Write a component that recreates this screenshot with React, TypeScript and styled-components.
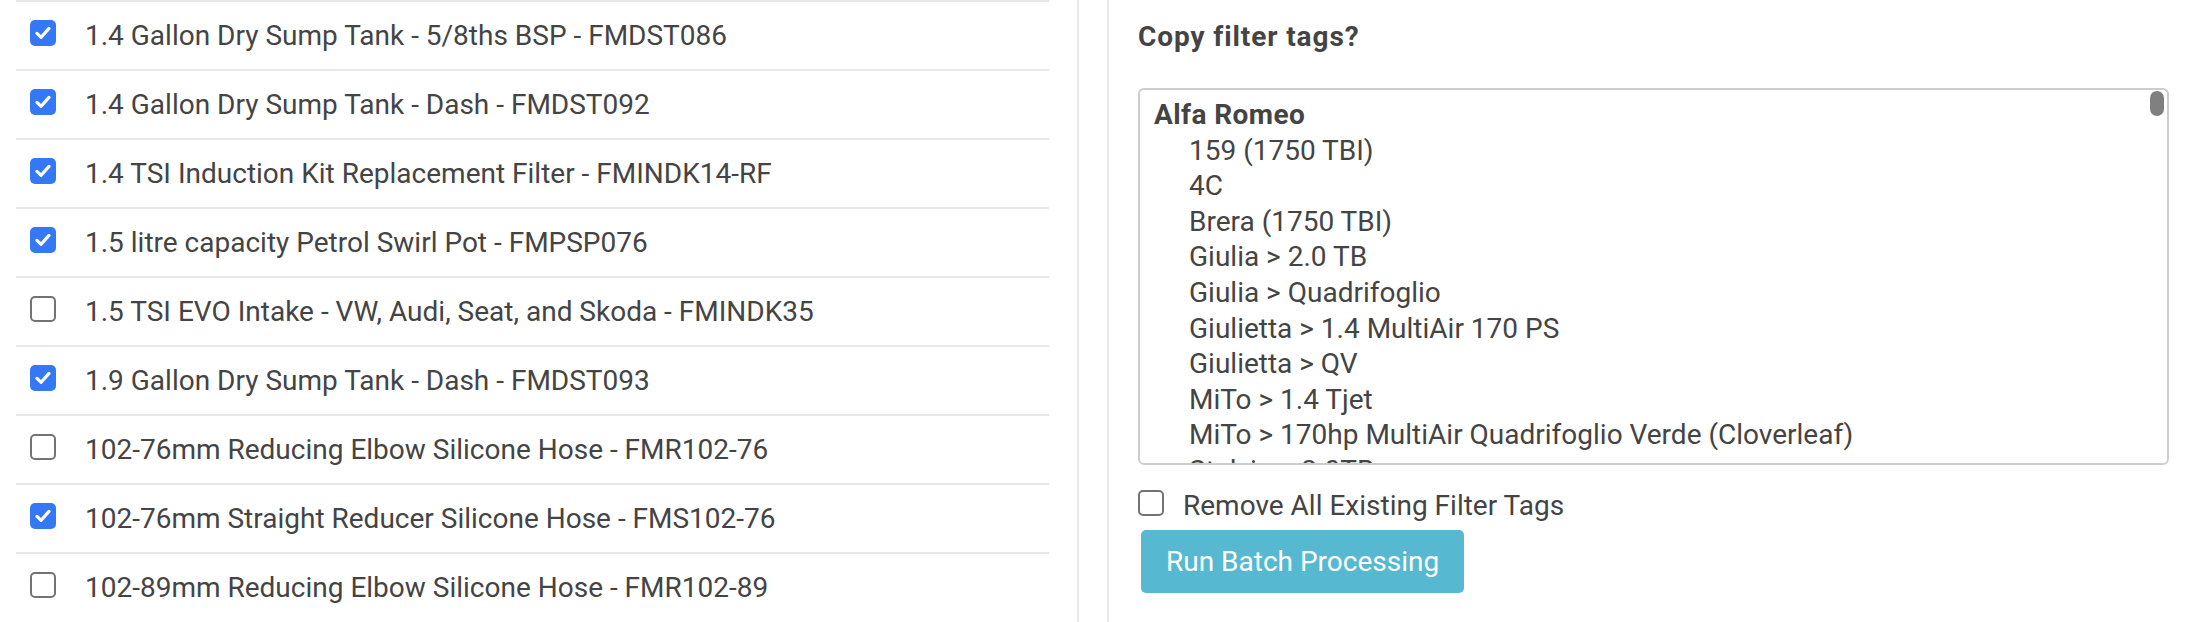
import React from "react";
import styled, { createGlobalStyle } from "styled-components";

const GlobalStyle = createGlobalStyle`
  html, body {
    margin: 0;
    padding: 0;
    background: #ffffff;
  }
  body {
    font-family: Roboto, "Liberation Sans", Arial, sans-serif;
    color: #444444;
  }
  * { box-sizing: border-box; }
`;

const Page = styled.div`
  display: flex;
  width: 2188px;
  height: 622px;
  overflow: hidden;
`;

const LeftPane = styled.div`
  width: 1079px;
  flex: none;
  padding-left: 16px;
  padding-right: 28px;
  border-right: 2px solid #e9e9e9;
`;

const ProductList = styled.ul`
  list-style: none;
  margin: 0;
  padding: 0;
`;

const ProductRow = styled.li`
  display: flex;
  align-items: center;
  height: 69px;
  border-top: 2px solid #e7e7e7;
  padding-left: 14px;
  font-size: 28px;
  line-height: 32px;
  color: #444444;
`;

const Box = styled.span<{ $checked: boolean }>`
  flex: none;
  display: flex;
  align-items: center;
  justify-content: center;
  width: 26px;
  height: 26px;
  margin-bottom: 6px;
  border-radius: 5px;
  background: ${(p) => (p.$checked ? "#3478f6" : "#ffffff")};
  border: ${(p) => (p.$checked ? "none" : "2px solid #737373")};
`;

const RowLabel = styled.span`
  margin-left: 29px;
  white-space: nowrap;
`;

const RightPane = styled.div`
  flex: 1;
  margin-left: 28px;
  border-left: 2px solid #e9e9e9;
  padding-left: 29px;
  padding-top: 20px;
`;

const Panel = styled.div`
  width: 1031px;
  display: flex;
  flex-direction: column;
`;

const Heading = styled.h3`
  margin: 0;
  font-size: 28px;
  line-height: 34px;
  font-weight: 700;
  letter-spacing: 0.9px;
  color: #444444;
`;

const TagBox = styled.div`
  position: relative;
  margin-top: 34px;
  height: 377px;
  border: 2px solid #cdcdcd;
  border-radius: 6px;
  overflow: hidden;
  padding: 7px 0 0 14px;
`;

const TagGroup = styled.div`
  font-size: 28px;
  line-height: 35.6px;
  font-weight: 700;
  letter-spacing: 0.4px;
  color: #444444;
  white-space: nowrap;
`;

const TagOption = styled.div`
  font-size: 28px;
  line-height: 35.6px;
  font-weight: 400;
  padding-left: 35px;
  color: #444444;
  white-space: nowrap;
`;

const ScrollThumb = styled.div`
  position: absolute;
  top: 1px;
  right: 3px;
  width: 14px;
  height: 25px;
  border-radius: 7px;
  background: #808080;
`;

const OptionRow = styled.label`
  display: flex;
  align-items: center;
  margin-top: 25px;
  font-size: 28px;
  line-height: 32px;
  color: #444444;
`;

const OptionText = styled.span`
  margin-left: 19px;
  white-space: nowrap;
`;

const RunButton = styled.button`
  align-self: flex-start;
  margin-top: 8px;
  margin-left: 3px;
  height: 63px;
  padding: 0 25px;
  border: none;
  border-radius: 5px;
  background: #56b8d1;
  color: #ffffff;
  font-family: Roboto, "Liberation Sans", Arial, sans-serif;
  font-size: 28px;
  line-height: 32px;
  cursor: pointer;
`;

const Check = () => (
  <svg width="16" height="14" viewBox="0 0 16 14" fill="none">
    <path
      d="M2 7.4 L6.1 11.3 L14 2.4"
      stroke="#ffffff"
      strokeWidth="3.2"
      strokeLinecap="round"
      strokeLinejoin="round"
    />
  </svg>
);

const Checkbox = ({ checked }: { checked: boolean }) => (
  <Box $checked={checked}>{checked ? <Check /> : null}</Box>
);

const products: { name: string; checked: boolean }[] = [
  { name: "1.4 Gallon Dry Sump Tank - 5/8ths BSP - FMDST086", checked: true },
  { name: "1.4 Gallon Dry Sump Tank - Dash - FMDST092", checked: true },
  { name: "1.4 TSI Induction Kit Replacement Filter - FMINDK14-RF", checked: true },
  { name: "1.5 litre capacity Petrol Swirl Pot - FMPSP076", checked: true },
  { name: "1.5 TSI EVO Intake - VW, Audi, Seat, and Skoda - FMINDK35", checked: false },
  { name: "1.9 Gallon Dry Sump Tank - Dash - FMDST093", checked: true },
  { name: "102-76mm Reducing Elbow Silicone Hose - FMR102-76", checked: false },
  { name: "102-76mm Straight Reducer Silicone Hose - FMS102-76", checked: true },
  { name: "102-89mm Reducing Elbow Silicone Hose - FMR102-89", checked: false },
];

const alfaModels = [
  "159 (1750 TBI)",
  "4C",
  "Brera (1750 TBI)",
  "Giulia > 2.0 TB",
  "Giulia > Quadrifoglio",
  "Giulietta > 1.4 MultiAir 170 PS",
  "Giulietta > QV",
  "MiTo > 1.4 Tjet",
  "MiTo > 170hp MultiAir Quadrifoglio Verde (Cloverleaf)",
  "Stelvio > 2.0TB",
  "Stelvio > Quadrifoglio",
];

export default function App() {
  return (
    <>
      <GlobalStyle />
      <Page>
        <LeftPane>
          <ProductList>
            {products.map((p) => (
              <ProductRow key={p.name}>
                <Checkbox checked={p.checked} />
                <RowLabel>{p.name}</RowLabel>
              </ProductRow>
            ))}
          </ProductList>
        </LeftPane>
        <RightPane>
          <Panel>
            <Heading>Copy filter tags?</Heading>
            <TagBox>
              <TagGroup>Alfa Romeo</TagGroup>
              {alfaModels.map((m) => (
                <TagOption key={m}>{m}</TagOption>
              ))}
              <ScrollThumb />
            </TagBox>
            <OptionRow>
              <Checkbox checked={false} />
              <OptionText>Remove All Existing Filter Tags</OptionText>
            </OptionRow>
            <RunButton>Run Batch Processing</RunButton>
          </Panel>
        </RightPane>
      </Page>
    </>
  );
}
